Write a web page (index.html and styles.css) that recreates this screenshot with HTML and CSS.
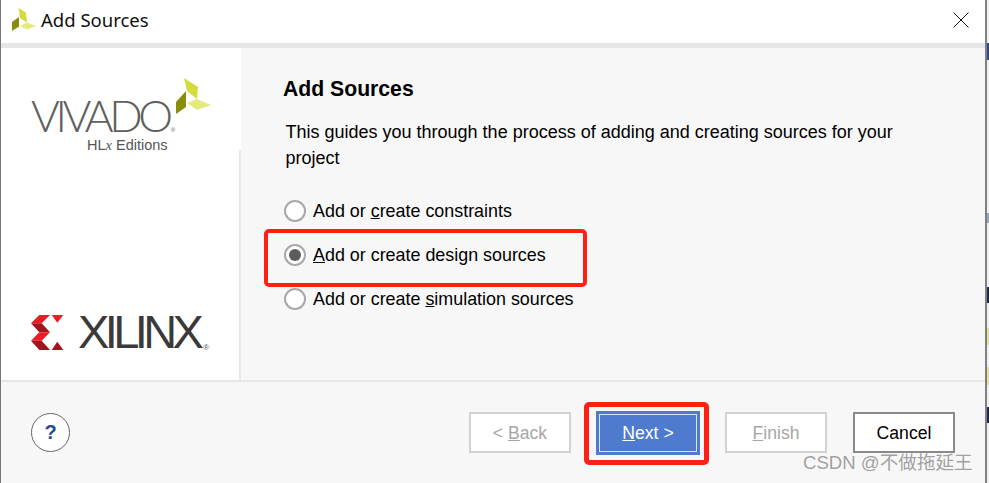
FILE: index.html
```html
<!DOCTYPE html>
<html lang="en">
<head>
<meta charset="utf-8">
<title>Add Sources</title>
<link rel="stylesheet" href="styles.css">
</head>
<body>
<div class="dialog">
  <header class="titlebar">
    <svg class="title-icon" width="25" height="24" viewBox="0 0 25 24">
      <polygon points="6.5,0 14,4.5 15,14.5 8,10" fill="#d3dc3c"/>
      <polygon points="0,14 7,9 7,18.5 0,23" fill="#8a8c0c"/>
      <polygon points="8,18 15,14.5 24,18 15,21.5" fill="#e4ea7c"/>
    </svg>
    <span class="title-text">Add Sources</span>
    <svg class="close" width="16" height="16" viewBox="0 0 16 16"><path d="M0.5 0.5L15.5 15.5M15.5 0.5L0.5 15.5" stroke="#111" stroke-width="1" fill="none"/></svg>
  </header>
  <div class="band"></div>
  <main class="body">
    <aside class="brand">
      <div class="vivado">
        <div class="vivado-line"><span class="vivado-word">VIVADO</span><span class="reg-small">®</span></div>
        <span class="hlx">HL<i>x</i> Editions</span>
        <svg class="vivado-mark" width="36" height="37" viewBox="0 0 36 37">
          <polygon points="8,0 22,9 21,21 11,13" fill="#d3dc3c"/>
          <polygon points="0,24 10,13 10,29 0,36" fill="#8a8c0c"/>
          <polygon points="11,25 21,21 35,27 21,32" fill="#e4ea7c"/>
        </svg>
      </div>
      <div class="xilinx">
        <svg class="xilinx-mark" width="33" height="35" viewBox="0 0 33 35">
          <polygon points="8.3,0 19,0 10.7,8.3 0,8.3" fill="#ed1c24"/>
          <polygon points="0,8.3 10.7,8.3 19,17.3 8.3,17.3" fill="#a0161c"/>
          <polygon points="8.3,17.3 19,17.3 10.7,25.7 0,25.7" fill="#ed1c24"/>
          <polygon points="0,25.7 10.7,25.7 19,35 8.3,35" fill="#a0161c"/>
          <polygon points="20.7,0 32.3,0 26.3,7.7" fill="#ed1c24"/>
          <polygon points="20.7,35 26.3,26.7 32.3,35" fill="#a0161c"/>
        </svg>
        <span class="xilinx-word">XILINX</span><span class="reg">®</span>
      </div>
    </aside>
    <section class="content">
      <h1 class="heading">Add Sources</h1>
      <p class="intro">This guides you through the process of adding and creating sources for your project</p>
      <div class="options">
        <label class="option"><span class="radio"></span><span>Add or <u>c</u>reate constraints</span></label>
        <label class="option"><span class="radio checked"></span><span><u>A</u>dd or create design sources</span></label>
        <label class="option"><span class="radio"></span><span>Add or create <u>s</u>imulation sources</span></label>
      </div>
    </section>
  </main>
  <footer class="footer">
    <button class="help">?</button>
    <div class="buttons">
      <button class="btn disabled">&lt; <u>B</u>ack</button>
      <button class="btn primary"><u>N</u>ext &gt;</button>
      <button class="btn disabled finish"><u>F</u>inish</button>
      <button class="btn cancel">Cancel</button>
    </div>
  </footer>
</div>
<div class="mark mark-option"></div>
<div class="mark mark-next"></div>
<div class="watermark">CSDN @不做拖延王</div>
<div class="edge edge-a"></div>
<div class="edge edge-b"></div>
<div class="edge edge-c"></div>
<div class="edge edge-d"></div>
<div class="edge edge-e"></div>
<div class="edge edge-f"></div>
</body>
</html>
```
FILE: styles.css
```css
* { box-sizing: border-box; }
html, body { margin: 0; padding: 0; }
body {
  width: 989px; height: 483px; overflow: hidden; position: relative;
  background: #f0f0f0;
  font-family: "Liberation Sans", Arial, sans-serif;
  color: #000;
}
.dialog {
  width: 987px; height: 483px;
  border-left: 1px solid #777; border-right: 2px solid #808080;
  display: flex; flex-direction: column; background: #f7f7f7;
}
.titlebar {
  height: 43px; background: #fff; flex: none;
  display: flex; align-items: center; padding: 0 16px 3px 11px;
}
.title-icon { flex: none; }
.title-text { font: 18.5px/24px "Noto Sans", sans-serif; margin-left: 4px; color: #111; }
.close { margin-left: auto; }
.band { height: 5px; background: #e6e6e6; flex: none; }
.body { height: 334px; display: flex; flex: none; border-bottom: 2px solid #e6e6e6; }
.brand {
  width: 240px; flex: none; background: #fff; display: flex; flex-direction: column;
  justify-content: space-between; padding: 30px 0 28px 30px; position: relative;
}
.brand::after {
  content: ""; position: absolute; right: 0; top: 102px; bottom: 0; width: 2px; background: #e8e8e8;
}
.vivado { position: relative; height: 75px; padding-top: 18px; color: #606060; }
.vivado-line { height: 38px; line-height: 38px; white-space: nowrap; }
.vivado-word { font: 300 44px/38px Lato, sans-serif; letter-spacing: -4.4px; }
.reg-small { font-size: 6px; line-height: 6px; margin-left: 2px; }
.hlx { display: block; font: 14.5px/16px "Liberation Sans", sans-serif; margin: 3px 0 0 56px; color: #555; }
.hlx i { font-family: "Liberation Serif", serif; }
.vivado-mark { position: absolute; left: 145px; top: 0; }
.xilinx { display: flex; align-items: center; }
.xilinx-mark { flex: none; }
.xilinx-word { font: 47px/40px "Liberation Sans", sans-serif; letter-spacing: -4.6px; color: #3a3a3a; margin-left: 14px; }
.reg { font-size: 8px; align-self: flex-end; color: #555; margin-left: 4px; }
.content { flex: 1; padding: 28px 40px 0 42px; }
.heading { margin: 0; font: bold 21.2px/26px "Liberation Sans", sans-serif; }
.intro { margin: 17px 0 0 2.5px; font-size: 18px; line-height: 26px; width: 640px; }
.options { margin-top: 18px; display: flex; flex-direction: column; }
.option { height: 44px; display: flex; align-items: center; gap: 7px; font-size: 17.9px; margin-left: 1px; }
.radio { width: 22px; height: 22px; border-radius: 50%; border: 2px solid #a8a8a8; background: #fff; display: flex; align-items: center; justify-content: center; }
.radio.checked::after { content: ""; width: 12px; height: 12px; border-radius: 50%; background: #5c5c5c; }
.footer { flex: 1; display: flex; align-items: center; padding: 0 30px 0 30px; }
.help { width: 39px; height: 39px; border-radius: 50%; border: 1px solid #666; background: #fff; color: #2a4b8d; font: bold 20px "Liberation Sans", sans-serif; padding: 0; }
.buttons { margin-left: auto; display: flex; gap: 26px; }
.btn { width: 102px; height: 41px; font: 17.6px "Liberation Sans", sans-serif; background: #fff; padding: 2px 0 0; border: 2px solid #8a8a8a; color: #000; }
.btn.disabled { border-color: #d2d2d2; color: #a6a6a6; }
.btn.primary { width: 104px; height: 44px; margin: -1px -1px -2px; background: #4f7bcf; color: #fff; border: none; padding-top: 1px; box-shadow: inset 0 0 0 3px #4f7bcf, inset 0 0 0 4px #d8e4f6; }
.mark { position: absolute; border: 4px solid #ff2015; border-radius: 5px; }
.mark-option { left: 264px; top: 229px; width: 323px; height: 58px; }
.mark-next { left: 584px; top: 402px; width: 125px; height: 63px; border-width: 5px; }
.watermark { position: absolute; left: 803px; top: 451px; font: 18.6px/24px "Liberation Sans", "Noto Sans CJK SC", sans-serif; color: rgba(110,110,110,.65); }
.edge { position: absolute; left: 987px; width: 2px; }
.edge-a { top: 43px; height: 17px; background: #2f4a86; }
.edge-b { top: 213px; height: 10px; background: #9aa6c0; }
.edge-c { top: 287px; height: 16px; background: #1d2a4a; }
.edge-d { top: 328px; height: 17px; background: #e4e196; }
.edge-e { top: 367px; height: 18px; background: #e4e196; }
.edge-f { top: 407px; height: 16px; background: #1d2a4a; }
```
